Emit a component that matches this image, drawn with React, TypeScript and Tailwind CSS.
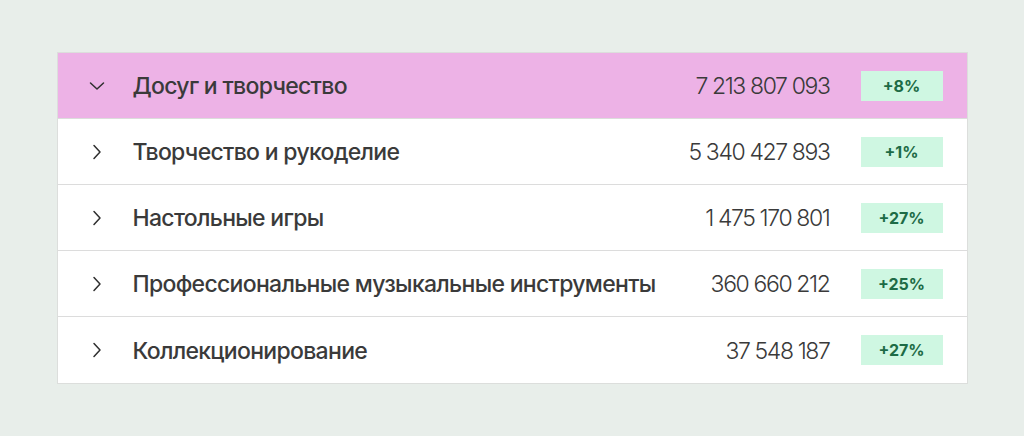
import React from "react";

const rows = [
  { name: "Досуг и творчество", value: "7 213 807 093", pct: "+8%", open: true },
  { name: "Творчество и рукоделие", value: "5 340 427 893", pct: "+1%" },
  { name: "Настольные игры", value: "1 475 170 801", pct: "+27%" },
  { name: "Профессиональные музыкальные инструменты", value: "360 660 212", pct: "+25%" },
  { name: "Коллекционирование", value: "37 548 187", pct: "+27%" },
];

function Chevron({ open }: { open?: boolean }) {
  return (
    <svg width="16" height="16" viewBox="0 0 16 16" fill="none" className="shrink-0">
      {open ? (
        <path d="M1.5 5 L8 11 L14.5 5" stroke="#2f2f2f" strokeWidth="1.5" strokeLinecap="round" strokeLinejoin="round" />
      ) : (
        <path d="M5 1.5 L11 8 L5 14.5" stroke="#2f2f2f" strokeWidth="1.5" strokeLinecap="round" strokeLinejoin="round" />
      )}
    </svg>
  );
}

export default function App() {
  return (
    <div className="w-[1024px] h-[436px] bg-[#e8eeea] flex items-center justify-center" style={{ fontFamily: "Inter, 'Noto Sans', sans-serif" }}>
      <div className="w-[911px] border border-[#dcdedc] bg-white flex flex-col">
        {rows.map((r, i) => (
          <div
            key={i}
            className={`h-[66px] flex items-center pl-[31px] pr-[24px] ${i < rows.length - 1 ? "border-b border-[#dcdcdc]" : ""} ${r.open ? "bg-[#edb2e6]" : "bg-white"}`}
          >
            <div className="w-[16px] flex justify-center"><Chevron open={r.open} /></div>
            <div className="ml-[28px] flex-1 text-[23px] font-medium text-[#3a3a3a] tracking-[-0.03em] leading-none pt-[2px]">{r.name}</div>
            <div className="text-[23px] font-light text-[#3a3a3a] tracking-[-0.06em] leading-none pt-[2px]">{r.value}</div>
            <div className="ml-[31px] w-[82px] h-[30px] bg-[#cff7e2] flex items-center justify-center text-[16px] font-bold text-[#1d6b46]">{r.pct}</div>
          </div>
        ))}
      </div>
    </div>
  );
}
